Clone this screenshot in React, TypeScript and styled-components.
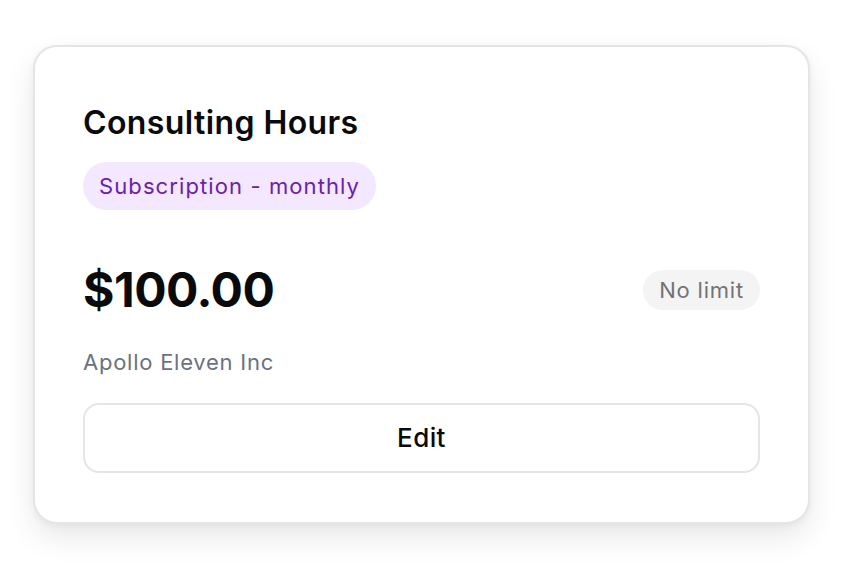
import { createGlobalStyle } from "styled-components";
import styled from "styled-components";

const GlobalStyle = createGlobalStyle`
  html, body {
    margin: 0;
    padding: 0;
    background: #ffffff;
  }
  body {
    font-family: Inter, "Noto Sans", sans-serif;
    -webkit-font-smoothing: antialiased;
  }
`;

const Page = styled.main`
  padding: 45px 44px 40px 33px;
`;

const Card = styled.section`
  width: 777px;
  box-sizing: border-box;
  border: 2px solid #e5e5e5;
  border-radius: 24px;
  background: #ffffff;
  box-shadow: 0 14px 30px rgba(0, 0, 0, 0.09), 0 2px 6px rgba(0, 0, 0, 0.05);
  padding: 56px 48px 49px 48px;
  display: flex;
  flex-direction: column;
`;

const Title = styled.h2`
  margin: 0;
  font-size: 32px;
  line-height: 40px;
  font-weight: 600;
  color: #0a0a0a;
  letter-spacing: 0.4px;
`;

const Pill = styled.span<{ $tone: "purple" | "gray" }>`
  display: inline-flex;
  align-items: center;
  border-radius: 999px;
  font-size: 22px;
  line-height: 32px;
  font-weight: 400;
  padding: ${(p) => (p.$tone === "purple" ? "8px 16px" : "4px 16px")};
  background: ${(p) => (p.$tone === "purple" ? "#f3e8ff" : "#f4f4f5")};
  color: ${(p) => (p.$tone === "purple" ? "#6b21a8" : "#737373")};
  letter-spacing: ${(p) => (p.$tone === "purple" ? "1.1px" : "0.8px")};
`;

const BadgeRow = styled.div`
  display: flex;
  margin-top: 19px;
`;

const PriceRow = styled.div`
  display: flex;
  justify-content: space-between;
  align-items: center;
  margin-top: 52px;
`;

const Price = styled.div`
  font-size: 48px;
  line-height: 56px;
  font-weight: 700;
  color: #0a0a0a;
  letter-spacing: -0.5px;
`;

const Company = styled.p`
  margin: 28px 0 0;
  font-size: 22px;
  line-height: 32px;
  color: #6b7280;
  letter-spacing: 0.75px;
`;

const EditButton = styled.button`
  margin-top: 25px;
  width: 100%;
  box-sizing: border-box;
  border: 2px solid #e5e5e5;
  border-radius: 16px;
  background: #ffffff;
  padding: 17px 0;
  font-family: inherit;
  font-size: 26px;
  line-height: 32px;
  font-weight: 500;
  color: #0a0a0a;
  letter-spacing: 0.4px;
  cursor: pointer;
`;

export default function App() {
  return (
    <>
      <GlobalStyle />
      <Page>
        <Card>
          <Title>Consulting Hours</Title>
          <BadgeRow>
            <Pill $tone="purple">Subscription - monthly</Pill>
          </BadgeRow>
          <PriceRow>
            <Price>$100.00</Price>
            <Pill $tone="gray">No limit</Pill>
          </PriceRow>
          <Company>Apollo Eleven Inc</Company>
          <EditButton type="button">Edit</EditButton>
        </Card>
      </Page>
    </>
  );
}
